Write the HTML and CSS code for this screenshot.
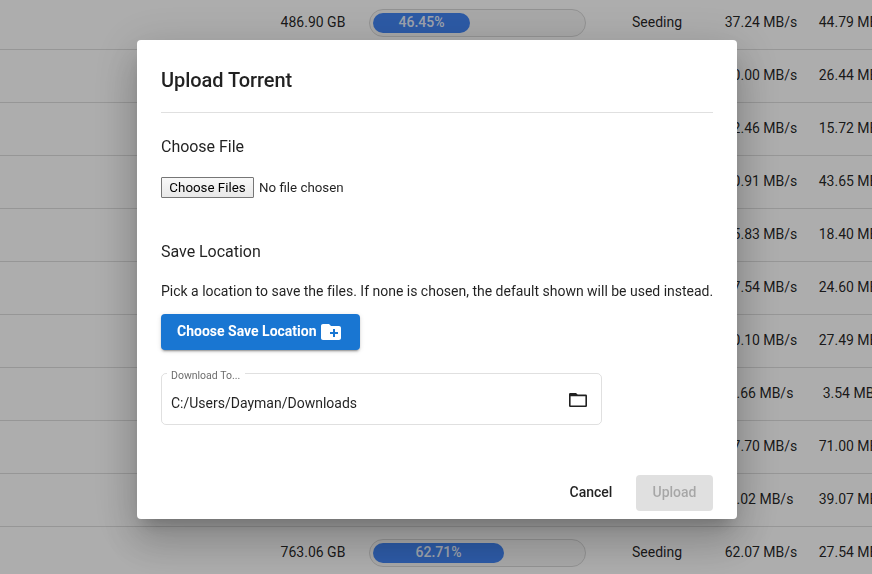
FILE: index.html
```html
<!DOCTYPE html>
<html lang="en">
<head>
<meta charset="utf-8">
<title>Upload Torrent</title>
<link rel="stylesheet" href="styles.css">
</head>
<body>
<main class="table">
  <div class="row"><span></span><span>486.90 GB</span><div class="progress"><div class="fill" style="width:46.45%">46.45%</div></div><span class="status">Seeding</span><span>37.24 MB/s</span><span>44.79 MB/s</span></div>
  <div class="row"><span></span><span></span><span></span><span></span><span>70.00 MB/s</span><span>26.44 MB/s</span></div>
  <div class="row"><span></span><span></span><span></span><span></span><span>62.46 MB/s</span><span>15.72 MB/s</span></div>
  <div class="row"><span></span><span></span><span></span><span></span><span>50.91 MB/s</span><span>43.65 MB/s</span></div>
  <div class="row"><span></span><span></span><span></span><span></span><span>45.83 MB/s</span><span>18.40 MB/s</span></div>
  <div class="row"><span></span><span></span><span></span><span></span><span>27.54 MB/s</span><span>24.60 MB/s</span></div>
  <div class="row"><span></span><span></span><span></span><span></span><span>30.10 MB/s</span><span>27.49 MB/s</span></div>
  <div class="row"><span></span><span></span><span></span><span></span><span>4.66 MB/s</span><span>3.54 MB/s</span></div>
  <div class="row"><span></span><span></span><span></span><span></span><span>37.70 MB/s</span><span>71.00 MB/s</span></div>
  <div class="row"><span></span><span></span><span></span><span></span><span>8.02 MB/s</span><span>39.07 MB/s</span></div>
  <div class="row"><span></span><span>763.06 GB</span><div class="progress"><div class="fill" style="width:62.71%">62.71%</div></div><span class="status">Seeding</span><span>62.07 MB/s</span><span>27.54 MB/s</span></div>
</main>
<div class="backdrop">
  <section class="dialog">
    <h1 class="title">Upload Torrent</h1>
    <h2 class="heading">Choose File</h2>
    <div class="picker"><button class="picker-button">Choose Files</button><span>No file chosen</span></div>
    <h2 class="heading heading-save">Save Location</h2>
    <p class="hint">Pick a location to save the files. If none is chosen, the default shown will be used instead.</p>
    <button class="primary"><span>Choose Save Location</span>
      <svg class="icon" viewBox="0 0 24 24"><path fill="currentColor" d="M20 6h-8l-2-2H4c-1.11 0-1.99.89-1.99 2L2 18c0 1.11.89 2 2 2h16c1.11 0 2-.89 2-2V8c0-1.11-.89-2-2-2zm-1 8h-3v3h-2v-3h-3v-2h3V9h2v3h3v2z"/></svg>
    </button>
    <fieldset class="field">
      <legend class="label">Download To...</legend>
      <div class="field-body"><span>C:/Users/Dayman/Downloads</span>
        <svg class="folder" viewBox="0 0 18 14"><path fill="currentColor" fill-rule="evenodd" d="M1.2 0H7l1.7 1.5H16.8Q18 1.5 18 2.7v10.1Q18 14 16.8 14H1.2Q0 14 0 12.8V1.2Q0 0 1.2 0zM1.6 3.3v9.1h14.8V3.3z"/></svg>
      </div>
    </fieldset>
    <div class="actions"><button class="cancel">Cancel</button><button class="upload" disabled>Upload</button></div>
  </section>
</div>
</body>
</html>
```
FILE: styles.css
```css
* { box-sizing: border-box; }
body {
  margin: 0;
  height: 574px;
  overflow: hidden;
  background: #fff;
  color: rgba(0, 0, 0, .87);
  font: 14px/20px Roboto, sans-serif;
}
button { font: inherit; border: 0; padding: 0; }
.table { margin-top: -3px; width: 902px; display: flow-root; }
.row {
  display: grid;
  grid-template-columns: 257px 112px 217px 128px 94px 94px;
  height: 53px;
  align-items: center;
  text-align: center;
  white-space: nowrap;
  border-bottom: 1px solid rgba(0, 0, 0, .13);
  padding-bottom: 2px;
}
.status { padding-left: 14px; }
.progress {
  height: 28px;
  margin-top: 2px;
  padding: 3px;
  border: 1px solid #d8d8d8;
  border-radius: 14px;
  background: #f8f8f8;
}
.fill {
  height: 20px;
  border-radius: 10px;
  background: #4285f4;
  color: rgba(255, 255, 255, .9);
  font-weight: 500;
  line-height: 19px;
}
.backdrop {
  position: fixed;
  inset: 0;
  background: rgba(0, 0, 0, .32);
  display: flex;
  justify-content: center;
  align-items: flex-start;
  padding: 40px 0 0 2px;
}
.dialog {
  width: 600px;
  height: 479px;
  padding: 24px 24px 8px;
  border-radius: 4px;
  background: #fff;
  display: flex;
  flex-direction: column;
  align-items: flex-start;
  box-shadow: 0 11px 15px -7px rgba(0, 0, 0, .2), 0 24px 38px 3px rgba(0, 0, 0, .14), 0 9px 46px 8px rgba(0, 0, 0, .12);
}
.title {
  width: 552px;
  height: 49px;
  margin: 0;
  border-bottom: 1px solid rgba(0, 0, 0, .12);
  font-size: 20px;
  font-weight: 500;
  line-height: 32px;
  letter-spacing: -.06px;
}
.heading { margin: 20px 0 16px; font-size: 16px; font-weight: 400; line-height: 28px; letter-spacing: -.03px; }
.heading-save { margin: 40px 0 15px; }
.picker { display: flex; align-items: center; gap: 5px; height: 21px; font-size: 13.333px; }
.picker-button {
  width: 93px;
  height: 21px;
  border: 1px solid #767676;
  border-radius: 1px;
  background: linear-gradient(#f8f8f8, #e8e8e8);
  color: #000;
  line-height: 19px;
}
.hint { margin: 0 0 13px; white-space: nowrap; letter-spacing: -.008px; }
.primary {
  display: flex;
  align-items: center;
  width: 199px;
  height: 36px;
  padding: 0 0 2px 16px;
  gap: 2.5px;
  border-radius: 4px;
  background: #1976d2;
  color: #fff;
  font-weight: 700;
  white-space: nowrap;
  box-shadow: 0 3px 1px -2px rgba(0, 0, 0, .2), 0 2px 2px 0 rgba(0, 0, 0, .14), 0 1px 5px 0 rgba(0, 0, 0, .12);
}
.icon { width: 24px; height: 24px; margin-top: 2px; }
.field {
  width: 441px;
  height: 59px;
  margin: 16px 0 0;
  padding: 0 14px 0 9px;
  border: 1px solid rgba(0, 0, 0, .12);
  border-radius: 5px;
}
.label { margin-left: -4px; padding: 5px 5px 0 4px; color: rgba(0, 0, 0, .6); font-size: 10.5px; line-height: 10px; }
.field-body { display: flex; justify-content: space-between; align-items: center; height: 44px; }
.folder { width: 18px; height: 14px; margin-top: -6px; }
.actions { display: flex; align-self: flex-end; margin-top: auto; }
.cancel { width: 91px; height: 36px; background: none; color: rgba(0, 0, 0, .87); font-weight: 500; padding: 0 0 2px 1px; }
.upload { width: 77px; height: 36px; border-radius: 4px; background: #e0e0e0; color: rgba(0, 0, 0, .26); font-weight: 500; padding: 0 0 2px; }
```
